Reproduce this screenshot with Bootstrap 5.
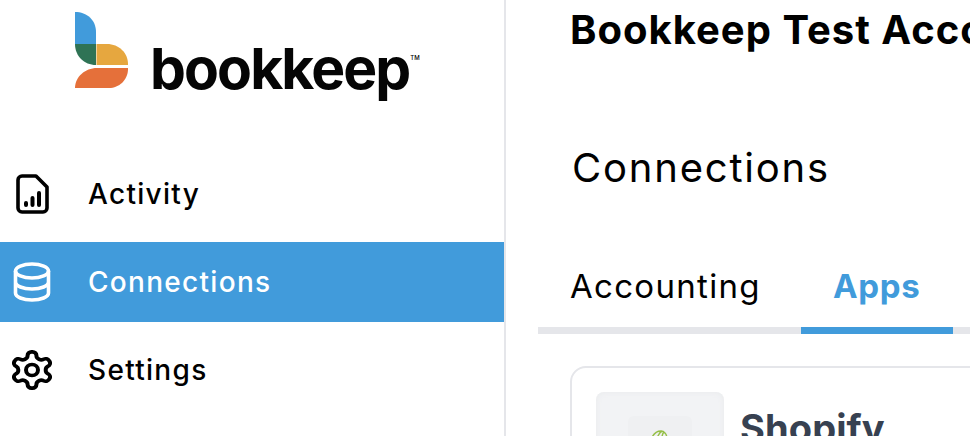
<!DOCTYPE html>
<html lang="en">
<head>
  <meta charset="UTF-8" />
  <meta name="viewport" content="width=device-width, initial-scale=1.0" />
  <title>Bookkeep Connections</title>
  <link href="https://cdn.jsdelivr.net/npm/bootstrap@5.3.2/dist/css/bootstrap.min.css" rel="stylesheet" />
  <style>
    html, body { height: 436px; overflow: hidden; }
    body { font-family: "Inter", "Open Sans", sans-serif; color: #000; background: #fff; }
    .app-shell { height: 436px; overflow: hidden; }
    .side-panel { width: 506px; border-right: 2px solid #e5e6ea; flex: none; }
    .brand-area { height: 154px; padding: 12px 0 0 75px; }
    .brand-name { font-size: 57px; font-weight: 700; letter-spacing: -1.9px; line-height: 1; margin: 28px 0 0 21px; color: #050505; }
    .brand-tm { font-size: 6px; font-weight: 500; margin: 41px 0 0 1px; }
    .side-link { height: 80px; margin-bottom: 8px; padding-left: 12px; color: #000; text-decoration: none; font-size: 28px; font-weight: 500; letter-spacing: 1.3px; width: 504px; }
    .side-link svg { width: 40px; height: 40px; flex: none; margin-right: 36px; }
    .side-link.current { background: #419bdb; color: #fff; }
    .main-panel { padding-left: 32px; flex: 1; min-width: 0; overflow: hidden; white-space: nowrap; }
    .acct-title { font-size: 40px; font-weight: 700; line-height: 46px; margin: 7px 0 0 32px; letter-spacing: 1px; }
    .page-title { font-size: 40px; font-weight: 400; line-height: 46px; margin: 92px 0 0 34px; letter-spacing: 1.8px; }
    .tab-strip { margin-top: 69px; border-bottom: 7px solid #e5e6ea; height: 74px; }
    .tab-item { font-size: 33px; line-height: 40px; height: 74px; padding: 6px 0 0 32px; border-bottom: 7px solid transparent; color: #000; text-decoration: none; letter-spacing: 1.3px; flex: none; }
    .tab-item.first { width: 263px; }
    .tab-item.on { width: 152px; color: #419bdb; font-weight: 700; letter-spacing: .7px; border-bottom-color: #419bdb; }
    .app-card { margin: 32px 0 0 32px; width: 600px; height: 200px; border: 2px solid #e5e6ea; border-radius: 16px; padding: 24px; }
    .app-thumb { width: 128px; height: 128px; background: #f2f3f5; border-radius: 8px; padding: 24px 32px; flex: none; box-shadow: inset 0 0 6px #e9eaec; }
    .app-thumb-inner { width: 64px; height: 64px; background: #eff0f2; border-radius: 6px; padding: 12px 21px; }
    .app-name { font-size: 38px; font-weight: 700; color: #374151; margin: 14px 0 0 16px; line-height: 44px; letter-spacing: .1px; }
  </style>
</head>
<body>
  <div class="d-flex app-shell">
    <aside class="side-panel">
      <div class="brand-area d-flex">
        <svg width="54" height="78" viewBox="0 0 54 78">
          <path d="M0 0C12 0 21 8 21 20V32H0Z" fill="#419bdb"/>
          <path d="M0 32H21V53C9 53 0 44 0 32Z" fill="#2f7355"/>
          <path d="M21.500 32H32C44 32 53 41 53 52V53H21.500Z" fill="#e6a73f"/>
          <path d="M53 56V57C53 68 44 76 34 76H0C0 65 10 56 22 56Z" fill="#e5703a"/>
        </svg>
        <div class="brand-name">bookkeep</div>
        <div class="brand-tm">TM</div>
      </div>
      <a class="side-link d-flex align-items-center" href="#">
        <svg viewBox="0 0 40 40" fill="none" stroke="currentColor" stroke-width="3.600" stroke-linejoin="round"><path d="M10 2H24L35 13V34A4 4 0 0 1 31 38H10A4 4 0 0 1 6 34V6A4 4 0 0 1 10 2Z"/><path d="M14 31V29M20.500 31V24M27 31V19" stroke-width="4" stroke-linecap="round"/></svg>
        Activity
      </a>
      <a class="side-link current d-flex align-items-center" href="#">
        <svg viewBox="0 0 40 40" fill="none" stroke="currentColor" stroke-width="3.600"><ellipse cx="20" cy="9" rx="16.500" ry="7"/><path d="M3.500 9V31C3.500 35 11 38 20 38S36.500 35 36.500 31V9M3.500 20C3.500 24 11 27 20 27S36.500 24 36.500 20"/></svg>
        Connections
      </a>
      <a class="side-link d-flex align-items-center" href="#">
        <svg viewBox="2 1 20 22" preserveAspectRatio="none" fill="none" stroke="currentColor" stroke-width="2" stroke-linecap="round" stroke-linejoin="round"><path d="M12.220 2h-.44a2 2 0 0 0-2 2v.18a2 2 0 0 1-1 1.730l-.43.25a2 2 0 0 1-2 0l-.15-.08a2 2 0 0 0-2.730.73l-.22.38a2 2 0 0 0 .73 2.730l.15.1a2 2 0 0 1 1 1.720v.51a2 2 0 0 1-1 1.740l-.15.09a2 2 0 0 0-.73 2.730l.22.38a2 2 0 0 0 2.730.73l.15-.08a2 2 0 0 1 2 0l.43.25a2 2 0 0 1 1 1.730V20a2 2 0 0 0 2 2h.44a2 2 0 0 0 2-2v-.18a2 2 0 0 1 1-1.730l.43-.25a2 2 0 0 1 2 0l.15.08a2 2 0 0 0 2.730-.73l.22-.39a2 2 0 0 0-.73-2.730l-.15-.08a2 2 0 0 1-1-1.740v-.5a2 2 0 0 1 1-1.740l.15-.09a2 2 0 0 0 .73-2.730l-.22-.38a2 2 0 0 0-2.730-.73l-.15.08a2 2 0 0 1-2 0l-.43-.25a2 2 0 0 1-1-1.730V4a2 2 0 0 0-2-2z"/><circle cx="12" cy="12" r="3"/></svg>
        Settings
      </a>
    </aside>
    <main class="main-panel">
      <h1 class="acct-title">Bookkeep Test Account</h1>
      <h2 class="page-title">Connections</h2>
      <div class="tab-strip d-flex">
        <a class="tab-item first" href="#">Accounting</a>
        <a class="tab-item on" href="#">Apps</a>
      </div>
      <div class="app-card d-flex">
        <div class="app-thumb">
          <div class="app-thumb-inner">
            <svg width="24" height="24" viewBox="0 0 24 24" fill="none" stroke="#95bf47" stroke-width="1.500"><path d="M2 10C4 4 8 1 12 1C15 1 18 4 18 9M8 9C9 5 11 2 13 1M13 8C13 5 14 3 15 2"/><path d="M2 10L22 7L23 24H1Z" fill="#95bf47" stroke="none"/></svg>
          </div>
        </div>
        <div class="app-name">Shopify</div>
      </div>
    </main>
  </div>
  <script src="https://cdn.jsdelivr.net/npm/bootstrap@5.3.2/dist/js/bootstrap.bundle.min.js"></script>
</body>
</html>
